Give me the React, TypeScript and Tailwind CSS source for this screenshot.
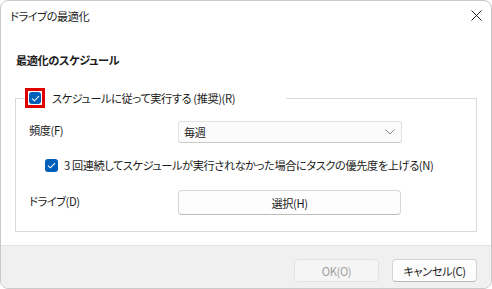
const font = "font-['Noto_Sans_CJK_JP','Noto_Sans',sans-serif] [font-feature-settings:'palt']"

function Check({ size }: { size: number }) {
  return (
    <span
      className="flex items-center justify-center rounded-[3px] bg-[#005fb8]"
      style={{ width: size, height: size }}
    >
      <svg width="9" height="7" viewBox="0 0 9 7" fill="none">
        <path d="M1 3.6 L3.4 5.8 L8 1.2" stroke="white" strokeWidth="1.1" />
      </svg>
    </span>
  )
}

export default function App() {
  return (
    <div className={`h-[289px] w-[492px] bg-white text-[11.2px] leading-[16px] tracking-[-0.4px] text-[#1b1b1b] ${font}`}>
      <div className="flex h-full flex-col overflow-hidden rounded-[8px] border border-[#c9c9c9]">
        {/* title bar */}
        <div className="flex h-[29px] shrink-0 items-center justify-between pl-[9px] pr-[9px]">
          <span>ドライブの最適化</span>
          <svg width="11" height="11" viewBox="0 0 11 11" className="text-[#222]">
            <path d="M0.5 0.5 L10.5 10.5 M10.5 0.5 L0.5 10.5" stroke="currentColor" strokeWidth="1" />
          </svg>
        </div>

        {/* body */}
        <div className="flex-1 px-[14px] pt-[22px]">
          <div className="pl-px font-bold">最適化のスケジュール</div>

          <fieldset className="mt-[20px] border border-[#dadada] px-[9px] pb-[16px]">
            <legend className="w-[261px]">
              <div className="flex items-center">
                <span className="border-[3px] border-[#e00000] p-[1px]">
                  <Check size={12} />
                </span>
                <span className="ml-[7px] whitespace-nowrap">スケジュールに従って実行する (推奨)(R)</span>
              </div>
            </legend>

            <div className="mt-[13px] flex items-start">
              <span className="w-[153px] pl-[4px] pt-[1px]">頻度(F)</span>
              <div className="flex h-[22px] w-[224px] items-center justify-between rounded-[3px] border border-[#e2e2e2] border-b-[#c9c9c9] bg-[#fbfbfb] pl-[5px] pr-[6px]">
                <span>毎週</span>
                <svg width="10" height="6" viewBox="0 0 10 6" fill="none">
                  <path d="M0.5 0.5 L5 5 L9.5 0.5" stroke="#7a7a7a" strokeWidth="0.9" />
                </svg>
              </div>
            </div>

            <div className="mt-[14px] flex items-center pl-[20px]">
              <Check size={13} />
              <span className="ml-[6px] whitespace-nowrap">3 回連続してスケジュールが実行されなかった場合にタスクの優先度を上げる(N)</span>
            </div>

            <div className="mt-[17px] flex items-start">
              <span className="w-[153px] pl-[4px] pt-[3px]">ドライブ(D)</span>
              <div className="flex h-[25px] w-[223px] items-center justify-center rounded-[4px] border border-[#d6d6d6] border-b-[#bdbdbd] bg-[#fdfdfd]">
                選択(H)
              </div>
            </div>
          </fieldset>
        </div>

        {/* footer */}
        <div className="flex h-[43px] shrink-0 justify-end gap-[13px] border-t border-[#e3e3e3] bg-[#f0f0f0] pr-[14px] pt-[13px]">
          <div className="flex h-[23px] w-[85px] items-center justify-center rounded-[4px] border border-[#e3e3e3] bg-[#f5f5f5] text-[#a0a0a0]">
            OK(O)
          </div>
          <div className="flex h-[23px] w-[85px] items-center justify-center rounded-[4px] border border-[#d3d3d3] border-b-[#b8b8b8] bg-[#fdfdfd]">
            キャンセル(C)
          </div>
        </div>
      </div>
    </div>
  )
}
